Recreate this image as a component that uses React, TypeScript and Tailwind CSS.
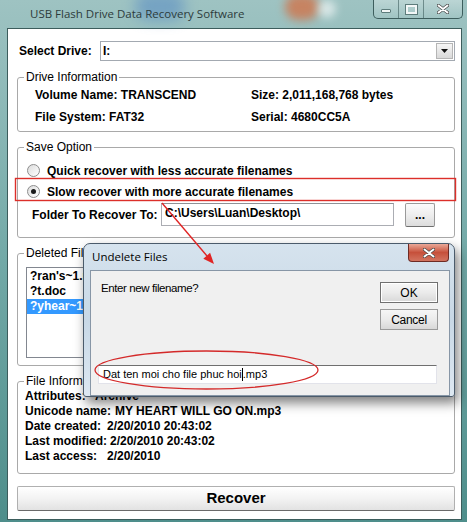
import React from 'react';

function Radio({ checked = false }: { checked?: boolean }) {
  return (
    <span className="flex h-[13px] w-[13px] shrink-0 items-center justify-center rounded-full border border-[#8d8d8d] bg-gradient-to-br from-[#dcdcdc] to-[#ffffff]">
      {checked && <span className="h-[5px] w-[5px] rounded-full bg-[#1a1a1a]" />}
    </span>
  );
}

function CloseGlyph({ w = 12, h = 10 }: { w?: number; h?: number }) {
  return (
    <svg width={w} height={h} viewBox="0 0 12 10">
      <path d="M1.5 1.5 L10.5 8.5 M10.5 1.5 L1.5 8.5" stroke="#4a4a4a" strokeWidth="3.4" strokeLinecap="round" />
      <path d="M1.5 1.5 L10.5 8.5 M10.5 1.5 L1.5 8.5" stroke="#ffffff" strokeWidth="1.9" strokeLinecap="round" />
    </svg>
  );
}

export default function App() {
  return (
    <div className="relative h-[522px] w-[467px] overflow-hidden bg-gradient-to-b from-[#9ec3c2] via-[#72a9a7] to-[#4e8e8b] font-['Liberation_Sans',Arial,sans-serif] text-[12px] text-black">
      {/* desktop seen through the glass frame */}
      <div className="absolute left-[135px] top-[-8px] h-[28px] w-[50px] rounded-full bg-[#4d83c4] opacity-50 blur-[7px]" />
      <div className="absolute left-[285px] top-[-6px] h-[26px] w-[34px] rounded-full bg-[#d8693a] opacity-70 blur-[5px]" />
      <div className="absolute left-[318px] top-[0px] h-[18px] w-[18px] rounded-full bg-white opacity-60 blur-[4px]" />

      {/* title bar */}
      <div className="relative flex h-[28px] items-start justify-between">
        <span className="pl-[30px] pt-[6px] font-['Open_Sans',sans-serif] text-[11.5px] leading-[15px] text-[#2c3b3b]">
          USB Flash Drive Data Recovery Software
        </span>
        <div className="mr-[4px] flex h-[19px] w-[90px] overflow-hidden rounded-b-[5px] border border-t-0 border-[#3d5e5d] bg-gradient-to-b from-white/30 to-white/5">
          <div className="flex w-[25px] items-end justify-center border-r border-[#3d5e5d]/60 pb-[5px]">
            <div className="h-[4px] w-[10px] rounded-[1px] border border-[#5d7c7b] bg-white/85" />
          </div>
          <div className="flex w-[25px] items-center justify-center border-r border-[#3d5e5d]/60">
            <div className="h-[9px] w-[11px] border-[2px] border-white/85 outline outline-1 outline-[#5d7c7b]" />
          </div>
          <div className="flex flex-1 items-center justify-center">
            <CloseGlyph />
          </div>
        </div>
      </div>

      {/* client area */}
      <div className="ml-[7px] mr-[5px] flex h-[492px] flex-col border border-[#3c5d5c] bg-white pl-[9px] pr-[6px] pt-[12px]">
        <div className="flex h-[20px] items-center">
          <span className="ml-[2px] w-[81px] font-bold">Select Drive:</span>
          <div className="flex h-[20px] flex-1 items-center border border-[#a3a9b1] bg-white">
            <span className="pl-[2px] font-bold">I:</span>
            <div className="ml-auto mr-[1px] flex h-[16px] w-[17px] items-center justify-center border border-[#b5b5b5] bg-gradient-to-b from-[#f6f6f6] to-[#d9d9d9]">
              <svg width="7" height="4" viewBox="0 0 7 4">
                <path d="M0 0h7L3.5 4z" fill="#111" />
              </svg>
            </div>
          </div>
        </div>

        <fieldset className="mt-[9px] rounded-[3px] border border-[#a9a9a9]">
          <legend className="ml-[6px] px-[2px] leading-[14px]">Drive Information</legend>
          <div className="grid grid-cols-[216px_1fr] pb-[3px] pl-[17px] font-bold leading-[22px]">
            <span>Volume Name: TRANSCEND</span>
            <span>Size: 2,011,168,768 bytes</span>
            <span>File System: FAT32</span>
            <span>Serial: 4680CC5A</span>
          </div>
        </fieldset>

        <fieldset className="mt-[8px] rounded-[3px] border border-[#a9a9a9]">
          <legend className="ml-[6px] px-[2px] leading-[14px]">Save Option</legend>
          <div className="flex flex-col pb-[11px] pt-[6px]">
            <div className="flex h-[21px] items-center gap-[7px] pl-[9px] font-bold">
              <Radio />
              <span>Quick recover with less accurate filenames</span>
            </div>
            <div className="flex h-[21px] items-center gap-[7px] pl-[9px] font-bold">
              <Radio checked />
              <span>Slow recover with more accurate filenames</span>
            </div>
            <div className="mt-[1px] flex h-[23px] items-center pl-[14px]">
              <span className="w-[129px] font-bold">Folder To Recover To:</span>
              <div className="h-[23px] w-[233px] border border-[#abadb3] border-t-[#8e9196] bg-white pl-[3px] pt-[1px] font-bold leading-[16px]">
                C:\Users\Luan\Desktop\
              </div>
              <div className="ml-[11px] flex h-[24px] w-[30px] items-center justify-center rounded-[2px] border border-[#9a9a9a] border-b-[#6f6f6f] bg-gradient-to-b from-[#fbfbfb] via-[#eeeeee] to-[#dcdcdc] font-bold leading-[10px]">
                ...
              </div>
            </div>
          </div>
        </fieldset>

        <fieldset className="mt-[8px] rounded-[3px] border border-[#a9a9a9]">
          <legend className="ml-[6px] px-[2px] leading-[14px]">Deleted Files</legend>
          <div className="pb-[7px] pl-[8px] pt-[7px]">
            <div className="h-[91px] w-[180px] border border-[#828790] bg-white pt-[1px] font-bold leading-[15px]">
              <div className="pl-[3px]">?ran's~1.mp3</div>
              <div className="pl-[3px]">?t.doc</div>
              <div className="bg-[#3399ff] pl-[3px] text-white">?yhear~1.mp3</div>
            </div>
          </div>
        </fieldset>

        <fieldset className="mt-[8px] rounded-[3px] border border-[#a9a9a9]">
          <legend className="ml-[6px] px-[2px] leading-[14px]">File Information</legend>
          <div className="flex flex-col pb-[9px] pl-[7px] pt-[1px] font-bold leading-[15px]">
            <div className="flex">
              <span className="w-[70px]">Attributes:</span>
              <span>Archive</span>
            </div>
            <div className="flex">
              <span className="w-[90px]">Unicode name:</span>
              <span>MY HEART WILL GO ON.mp3</span>
            </div>
            <div className="flex">
              <span className="w-[82px]">Date created:</span>
              <span>2/20/2010 20:43:02</span>
            </div>
            <div className="flex">
              <span className="w-[85px]">Last modified:</span>
              <span>2/20/2010 20:43:02</span>
            </div>
            <div className="flex">
              <span className="w-[82px]">Last access:</span>
              <span>2/20/2010</span>
            </div>
          </div>
        </fieldset>

        <button className="mt-[12px] flex h-[25px] w-full items-center justify-center rounded-[2px] border border-[#b0b0b0] border-b-[#6a6a6a] bg-gradient-to-b from-[#ffffff] via-[#f3f3f3] to-[#e2e2e2] text-[15px] font-bold">
          Recover
        </button>
      </div>

      {/* Undelete Files dialog */}
      <div className="absolute left-[83px] top-[243px] flex h-[154px] w-[372px] flex-col rounded-b-[3px] rounded-t-[7px] border border-[#4b5b6b] bg-gradient-to-b from-[#d6e3ee] via-[#c8d8e6] to-[#dde8f2] shadow-[3px_6px_12px_rgba(0,0,0,0.5)]">
        <div className="flex h-[26px] items-start">
          <span className="pl-[8px] pt-[5px] font-['Open_Sans',sans-serif] text-[11.5px] leading-[16px] text-black">
            Undelete Files
          </span>
          <div className="ml-auto mr-[5px] flex h-[18px] w-[41px] items-center justify-center rounded-b-[4px] border border-t-0 border-[#6e2b24] bg-gradient-to-b from-[#e9a898] via-[#c6503b] to-[#d2735f]">
            <CloseGlyph />
          </div>
        </div>
        <div className="ml-[6px] mr-[4px] flex flex-1 flex-col border border-[#8796a6] bg-[#f0f0f0] text-[11px]">
          <div className="flex items-start justify-between pt-[10px]">
            <span className="pl-[10px] text-[11.5px] leading-[14px] tracking-[-0.4px]">Enter new filename?</span>
            <div className="mr-[11px] mt-[1px] flex flex-col gap-[6px] text-[12px]">
              <div className="flex h-[21px] w-[58px] items-center justify-center border border-[#707070] bg-gradient-to-b from-[#f6f6f6] via-[#ebebeb] to-[#d8d8d8] leading-[14px] shadow-[inset_0_0_0_1px_#ffffff]">
                OK
              </div>
              <div className="flex h-[21px] w-[58px] items-center justify-center border border-[#9a9a9a] bg-gradient-to-b from-[#f6f6f6] via-[#ebebeb] to-[#d8d8d8] leading-[14px] tracking-[-0.3px]">
                Cancel
              </div>
            </div>
          </div>
          <div className="mb-[11px] ml-[7px] mr-[12px] mt-auto flex h-[19px] items-center border border-[#e2e3ea] border-t-[#6f6f6f] bg-white pl-[4px] leading-[15px]">
            <span>Dat ten moi cho file phuc hoi</span>
            <span className="h-[13px] w-[1px] bg-black" />
            <span>.mp3</span>
          </div>
        </div>
      </div>

      {/* red annotations */}
      <svg className="pointer-events-none absolute left-0 top-0" width="467" height="522" viewBox="0 0 467 522">
        <rect x="15.5" y="178.5" width="440" height="22" fill="none" stroke="#dc2f2a" strokeWidth="1.4" />
        <ellipse cx="206.5" cy="370" rx="111.5" ry="19" fill="none" stroke="#d42a2a" strokeWidth="1.3" />
        <line x1="162" y1="203" x2="207" y2="256" stroke="#e02424" strokeWidth="1.4" />
        <polygon points="214,264 203.3,258.8 210.1,252.8" fill="#e02424" />
      </svg>
    </div>
  );
}
